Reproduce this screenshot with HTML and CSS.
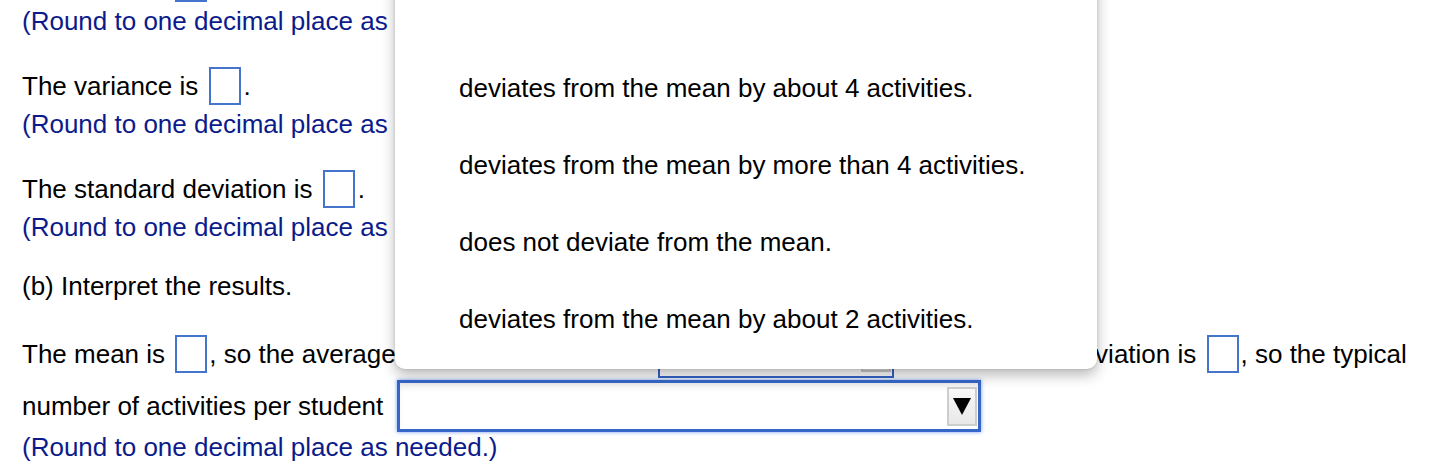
FILE: index.html
```html
<!DOCTYPE html>
<html>
<head>
<meta charset="utf-8">
<link rel="stylesheet" href="styles.css">
</head>
<body>
<div class="page">
  <div class="block">
    <div class="line">The mean is <span class="ans"></span>.</div>
    <div class="note">(Round to one decimal place as needed.)</div>
  </div>
  <div class="block">
    <div class="line">The variance is <span class="ans"></span>.</div>
    <div class="note">(Round to one decimal place as needed.)</div>
  </div>
  <div class="block">
    <div class="line">The standard deviation is <span class="ans"></span>.</div>
    <div class="note">(Round to one decimal place as needed.)</div>
  </div>
  <div class="line part">(b) Interpret the results.</div>
  <div class="line mean-row">The mean is <span class="ans"></span><span class="after">, so the average</span><span class="sel sel-upper"><span class="btn"><span class="tri"></span></span></span><span class="after-sel">The standard deviation is</span> <span class="ans"></span><span class="after">, so the typical</span></div>
  <div class="line act-row">number of activities per student <span class="sel sel-lower"><span class="btn"><span class="tri"></span></span></span></div>
  <div class="note last">(Round to one decimal place as needed.)</div>
</div>
<div class="popup">
  <div class="opt"></div>
  <div class="opt">deviates from the mean by about 4 activities.</div>
  <div class="opt">deviates from the mean by more than 4 activities.</div>
  <div class="opt">does not deviate from the mean.</div>
  <div class="opt">deviates from the mean by about 2 activities.</div>
</div>
</body>
</html>
```
FILE: styles.css
```css
html, body {
  margin: 0;
  padding: 0;
  background: #ffffff;
  overflow: hidden;
}
body {
  width: 1432px;
  height: 466px;
  position: relative;
  font-family: "Liberation Sans", Arial, sans-serif;
  font-size: 26px;
  color: #000;
}
.page {
  margin-top: -36px;
  padding-left: 22px;
}
.block {
  margin-bottom: 27px;
}
.block:nth-child(3) {
  margin-bottom: 21px;
}
.line {
  height: 38px;
  line-height: 38px;
  white-space: nowrap;
}
.note {
  height: 38px;
  line-height: 38px;
  white-space: nowrap;
  color: #0c1b8b;
}
.ans {
  display: inline-block;
  box-sizing: border-box;
  width: 32px;
  height: 38px;
  border: 2px solid #4474cc;
  background: #fff;
  vertical-align: top;
  margin: 0 3px 0 3px;
}
.after {
  margin-left: -1px;
}
.mean-row {
  margin-top: 30px;
}
.sel {
  display: inline-flex;
  box-sizing: border-box;
  justify-content: flex-end;
  align-items: center;
  vertical-align: top;
  background: #fff;
}
.sel-upper {
  width: 236px;
  height: 52px;
  margin: -9px 0 -5px 262px;
  border: 2px solid #3464c6;
  padding-right: 1px;
}
.after-sel {
  margin-left: 12px;
}
.act-row {
  margin-top: 7px;
  height: 52px;
  line-height: 52px;
}
.sel-lower {
  width: 584px;
  height: 52px;
  margin-left: 6px;
  border: 3px solid #3566c8;
  box-shadow: 0 0 4px rgba(60, 110, 230, 0.7), inset 0 6px 8px -4px rgba(0, 0, 0, 0.12);
  padding-right: 1px;
}
.btn {
  box-sizing: border-box;
  width: 30px;
  height: 39px;
  border: 2px solid #cdcdcd;
  background: linear-gradient(#f8f8f8, #e8e8e8);
  display: flex;
  align-items: center;
  justify-content: center;
}
.tri {
  width: 0;
  height: 0;
  border-left: 9px solid transparent;
  border-right: 9px solid transparent;
  border-top: 17px solid #000;
}
.note.last {
  height: 30px;
  line-height: 30px;
}
.popup {
  position: absolute;
  left: 395px;
  top: -27px;
  width: 702px;
  padding-bottom: 11px;
  background: #fff;
  border-radius: 0 0 10px 10px;
  box-shadow: 0 6px 14px rgba(0, 0, 0, 0.28), 0 0 3px rgba(0, 0, 0, 0.15);
  z-index: 5;
}
.opt {
  height: 77px;
  line-height: 77px;
  padding-left: 64px;
  white-space: nowrap;
}
```
